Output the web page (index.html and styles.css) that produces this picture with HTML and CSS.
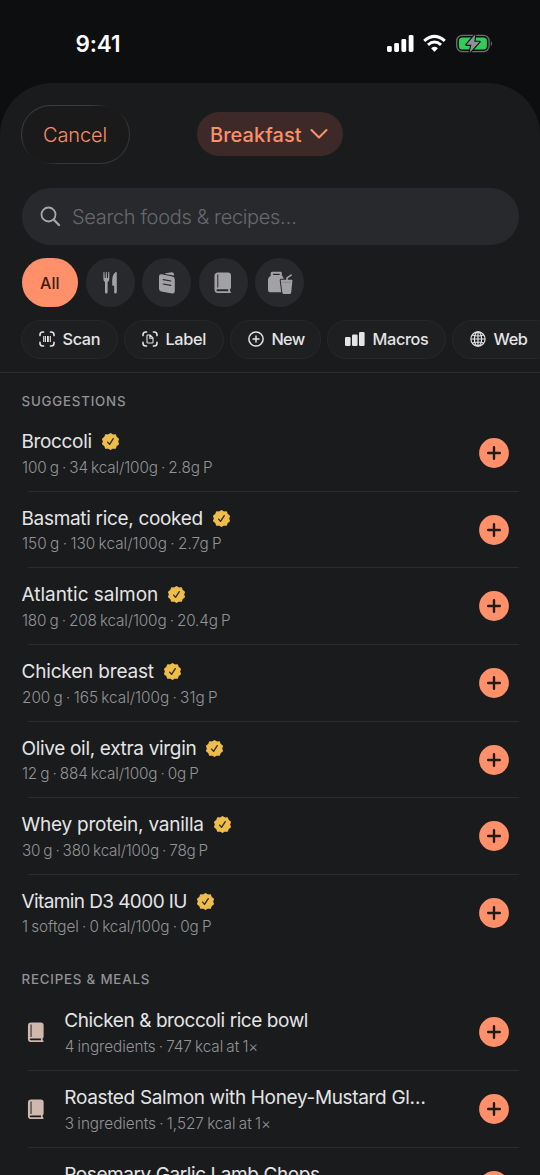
FILE: index.html
```html
<!DOCTYPE html>
<html lang="en">
<head>
<meta charset="utf-8">
<title>Add food</title>
<link rel="stylesheet" href="styles.css">
</head>
<body>
<svg width="0" height="0" class="defs" aria-hidden="true">
  <symbol id="seal" viewBox="0 0 16 16">
    <path fill="#efbd4c" stroke="#efbd4c" stroke-width="1.4" stroke-linejoin="round" d="M8 .7 10 2.1 12.5 1.9 13.3 4.2 15.3 5.7 14.5 8 15.3 10.3 13.3 11.8 12.5 14.1 10 13.9 8 15.3 6 13.9 3.5 14.1 2.7 11.8.7 10.3 1.5 8 .7 5.7 2.7 4.2 3.5 1.9 6 2.1Z"/>
    <path fill="none" stroke="#35301f" stroke-width="1.3" stroke-linecap="round" stroke-linejoin="round" d="M5.3 8.6 7.1 10.7 10.6 5.3"/>
  </symbol>
  <symbol id="plus" viewBox="0 0 30 30">
    <circle cx="15" cy="15" r="14.9" fill="#ff906a"/>
    <path d="M15 9.2V20.8M9.2 15H20.8" stroke="#211b1a" stroke-width="2.4" stroke-linecap="round"/>
  </symbol>
  <symbol id="book" viewBox="0 0 18 22">
    <path fill="currentColor" fill-rule="evenodd" d="M4 .5H14Q17 .5 17 3.5V15.2Q17 16.6 16 17V19.2Q17 19.4 17 20.2T16.2 21H4Q.5 21 .5 17.5V4Q.5 .5 4 .5ZM3.3 2.8V15.6H4.3V2.8Q4.3 2.3 3.8 2.3T3.3 2.8ZM3.6 17.2Q2.4 17.2 2.4 18.2T3.6 19.2H14.2V17.2Z"/>
  </symbol>
</svg>

<header class="status">
  <span class="time">9:41</span>
  <svg class="status-icons" width="106" height="20" viewBox="0 0 106 20">
    <g fill="#fff"><rect x="0" y="12" width="4.8" height="6" rx="1.4"/><rect x="7.2" y="9" width="4.8" height="9" rx="1.4"/><rect x="14.4" y="5" width="4.8" height="13" rx="1.4"/><rect x="21.7" y="1" width="4.8" height="17" rx="1.4"/></g>
    <g fill="none" stroke="#fff" stroke-width="3"><path d="M37.2 6.8Q47.5-2 57.8 6.8"/><path d="M41 10.8Q47.5 5.2 54 10.8"/></g>
    <path fill="#fff" d="M44.1 14.2Q47.5 11.4 50.9 14.2L48.2 17.3Q47.5 18 46.8 17.3Z"/>
    <rect x="69.7" y="1.4" width="32.4" height="16.2" rx="5.5" fill="none" stroke="#6a6c6e" stroke-width="1.4"/>
    <rect x="71.9" y="3.5" width="28" height="12" rx="3.5" fill="#32cc58"/>
    <path d="M103.9 6.7Q106.1 9.5 103.9 12.3Z" fill="#6a6c6e"/>
    <path d="M88.3.3 79.4 10.8H84.4L82.6 18.8 92.6 7.8H87.3Z" fill="#8f9293" stroke="#0e0f10" stroke-width="2.2" paint-order="stroke" stroke-linejoin="round"/>
  </svg>
</header>

<main class="sheet">
  <div class="nav">
    <button class="cancel"><span>Cancel</span></button>
    <button class="meal"><span>Breakfast</span><svg width="18" height="12" viewBox="0 0 18 12"><path d="M1.5 2 9 9.5 16.5 2" fill="none" stroke="currentColor" stroke-width="2.1" stroke-linecap="round" stroke-linejoin="round"/></svg></button>
  </div>

  <div class="search">
    <svg width="21" height="21" viewBox="0 0 21 21" fill="none" stroke="#a6a6aa" stroke-linecap="round"><circle cx="8.5" cy="8.5" r="7" stroke-width="1.8"/><path d="M13.8 13.8 19 19" stroke-width="2.3"/></svg>
    <span>Search foods &amp; recipes…</span>
  </div>

  <div class="filters">
    <button class="filter all">All</button>
    <button class="filter"><svg width="16" height="24" viewBox="0 0 16 24" fill="currentColor"><path d="M1.4 1.5V8Q1.5 10.4 3 11.1V21Q3 22.6 4.3 22.6T5.6 21V11.1Q7.2 10.4 7.3 8V1.5Q7.2.8 6.7.8T6.2 1.5L6 7H5L4.8 1.5Q4.8.8 4.3.8T3.8 1.5L3.7 7H2.8L2.5 1.5Q2.5.8 2 .8T1.4 1.5ZM14.8 2.3V21Q14.8 22.6 13.5 22.6T12.2 21V14.7H10.9Q10.2 14.7 10.2 14V9Q10.3 3.5 13.7 1 14.8.5 14.8 2.3Z"/></svg></button>
    <button class="filter"><svg width="18" height="22" viewBox="0 0 18 22"><path fill="currentColor" d="M6.5 1.6 13.5.2Q15.7 0 16.1 2.3V3.4L8 2.2Z"/><path fill="currentColor" d="M3.5 2.3 14.4 4.5Q16.8 5 16.8 7.4V19.2Q16.8 21.7 14.2 21.5L3.2 19.4Q1 19 1 16.7V4.4Q1 2 3.5 2.3Z"/><path d="M5.2 7.7 12.8 9M5.2 12 12.8 13.3" stroke="#28292c" stroke-width="1.2" stroke-linecap="round"/></svg></button>
    <button class="filter"><svg width="18" height="22"><use href="#book"/></svg></button>
    <button class="filter"><svg width="26" height="24" viewBox="0 0 26 24"><path fill="currentColor" d="M5.2.8H13.6Q14.8.8 14.8 2V4.6Q16.8 6 16.8 8.3V19Q16.8 21.2 14.6 21.2H3.2Q1 21.2 1 19V8.5Q1 6.2 3.7 4.7V2.2Q3.8.8 5.2.8Z"/><path d="M6.5 3.4H12.2" stroke="#28292c" stroke-width="1.2" stroke-linecap="round"/><path d="M14.2 8.8H24.6Q25.5 8.8 25.4 9.8L24.2 21.5Q24 23 22.5 23H17Q15.5 23 15.3 21.5L13.8 10Q13.6 8.8 14.2 8.8Z" fill="currentColor" stroke="#28292c" stroke-width="2" paint-order="stroke"/><path d="M20 9V6.9L24.2 4.2" fill="none" stroke="currentColor" stroke-width="1.6" stroke-linecap="round"/><path d="M15.6 11.2H24" stroke="#77787b" stroke-width=".7"/></svg></button>
  </div>

  <div class="actions">
    <button class="action scan"><svg width="16" height="16" viewBox="0 0 16 16" fill="none" stroke="currentColor" stroke-linecap="round"><path stroke-width="1.6" d="M1 4.6V3.8Q1 1 3.8 1H4.6M11.4 1H12.2Q15 1 15 3.8V4.6M15 11.4V12.2Q15 15 12.2 15H11.4M4.6 15H3.8Q1 15 1 12.2V11.4"/><path stroke-linecap="butt" stroke-width="1.1" d="M4.7 5V11M6.4 5V11M11.3 5V11"/><path stroke-linecap="butt" stroke-width="1.8" d="M8.9 5V11"/></svg><span>Scan</span></button>
    <button class="action label"><svg width="16" height="16" viewBox="0 0 16 16" fill="none" stroke="currentColor" stroke-linecap="round"><path stroke-width="1.6" d="M1 4.6V3.8Q1 1 3.8 1H4.6M11.4 1H12.2Q15 1 15 3.8V4.6M15 11.4V12.2Q15 15 12.2 15H11.4M4.6 15H3.8Q1 15 1 12.2V11.4"/><path stroke-width="1.1" stroke-linejoin="round" d="M5 4.6Q5 4 5.6 4H8L11 7V11.2Q11 12 10.2 12H5.8Q5 12 5 11.2ZM7.8 4.3V7.2H10.7"/></svg><span>Label</span></button>
    <button class="action new"><svg width="16" height="16" viewBox="0 0 16 16" fill="none" stroke="currentColor" stroke-linecap="round" stroke-width="1.5"><circle cx="8" cy="8" r="7.1"/><path d="M8 5V11M5 8H11"/></svg><span>New</span></button>
    <button class="action macros"><svg width="20" height="14" viewBox="0 0 20 14" fill="currentColor"><rect x="0" y="5" width="5.6" height="9" rx="1.2"/><rect x="7" y="2.5" width="5.6" height="11.5" rx="1.2"/><rect x="14" y="0" width="5.6" height="14" rx="1.2"/></svg><span>Macros</span></button>
    <button class="action web"><svg width="16" height="16" viewBox="0 0 16 16" fill="none" stroke="currentColor" stroke-width="1.15"><circle cx="8" cy="8" r="7.1"/><ellipse cx="8" cy="8" rx="3.6" ry="7.1"/><path d="M8 1V15M1 8H15M2.3 4Q8 6 13.7 4M2.3 12Q8 10 13.7 12"/></svg><span>Web</span></button>
  </div>

  <section class="list">
    <h2>SUGGESTIONS</h2>
    <article class="row"><div class="text"><h3 class="n1">Broccoli<svg><use href="#seal"/></svg></h3><p class="s1">100 g · 34 kcal/100g · 2.8g P</p></div><svg class="add"><use href="#plus"/></svg></article>
    <article class="row"><div class="text"><h3 class="n2">Basmati rice, cooked<svg><use href="#seal"/></svg></h3><p class="s2">150 g · 130 kcal/100g · 2.7g P</p></div><svg class="add"><use href="#plus"/></svg></article>
    <article class="row"><div class="text"><h3 class="n3">Atlantic salmon<svg><use href="#seal"/></svg></h3><p class="s3">180 g · 208 kcal/100g · 20.4g P</p></div><svg class="add"><use href="#plus"/></svg></article>
    <article class="row"><div class="text"><h3 class="n4">Chicken breast<svg><use href="#seal"/></svg></h3><p class="s4">200 g · 165 kcal/100g · 31g P</p></div><svg class="add"><use href="#plus"/></svg></article>
    <article class="row"><div class="text"><h3 class="n5">Olive oil, extra virgin<svg><use href="#seal"/></svg></h3><p class="s5">12 g · 884 kcal/100g · 0g P</p></div><svg class="add"><use href="#plus"/></svg></article>
    <article class="row"><div class="text"><h3 class="n6">Whey protein, vanilla<svg><use href="#seal"/></svg></h3><p class="s6">30 g · 380 kcal/100g · 78g P</p></div><svg class="add"><use href="#plus"/></svg></article>
    <article class="row"><div class="text"><h3 class="n7">Vitamin D3 4000 IU<svg><use href="#seal"/></svg></h3><p class="s7">1 softgel · 0 kcal/100g · 0g P</p></div><svg class="add"><use href="#plus"/></svg></article>
  </section>

  <section class="list recipes">
    <h2>RECIPES &amp; MEALS</h2>
    <article class="row"><svg class="book" viewBox="0 0 18 22"><use href="#book"/></svg><div class="text"><h3 class="n8">Chicken &amp; broccoli rice bowl</h3><p class="s8">4 ingredients · 747 kcal at 1×</p></div><svg class="add"><use href="#plus"/></svg></article>
    <article class="row"><svg class="book" viewBox="0 0 18 22"><use href="#book"/></svg><div class="text"><h3 class="n9">Roasted Salmon with Honey-Mustard Gl…</h3><p class="s9">3 ingredients · 1,527 kcal at 1×</p></div><svg class="add"><use href="#plus"/></svg></article>
    <article class="row"><svg class="book" viewBox="0 0 18 22"><use href="#book"/></svg><div class="text"><h3 class="n10">Rosemary Garlic Lamb Chops</h3></div><svg class="add"><use href="#plus"/></svg></article>
  </section>
</main>
</body>
</html>
```
FILE: styles.css
```css
* { box-sizing: border-box; }
html, body { height: 100%; }
body {
  margin: 0;
  overflow: hidden;
  background: #0d0e0f;
  color: #e4e4e5;
  font-family: Inter, "Liberation Sans", sans-serif;
  display: flex;
  flex-direction: column;
}
.defs { position: absolute; }
button { font: inherit; color: inherit; border: 0; padding: 0; margin: 0; background: none; display: flex; align-items: center; white-space: nowrap; flex: none; }
svg { display: block; flex: none; }
h2, h3, p { margin: 0; font-weight: 400; white-space: nowrap; }

.status { flex: none; height: 83px; padding: 0 47px 0 75.5px; display: flex; justify-content: space-between; }
.time { color: #fff; font-size: 22.5px; font-weight: 600; line-height: 28px; margin-top: 30px; letter-spacing: -.1px; }
.status-icons { margin-top: 34px; }

.sheet { flex: none; height: 1092px; overflow: hidden; background: #1a1b1d; border-radius: 52px 52px 0 0; }
.nav { height: 105px; padding: 22px 22px 0 21px; display: flex; align-items: flex-start; }
.cancel {
  width: 109px; height: 59px; border: 1px solid transparent; border-radius: 30px;
  background:
    linear-gradient(#1b1a1a, #1b1a1a) padding-box,
    conic-gradient(#3a3b3c 0 8%, #1d1d1e 14% 17%, #363738 22% 58%, #1d1d1e 64% 68%, #3a3b3c 74%) border-box;
  justify-content: center; color: #f58e6b; font-size: 20px; font-weight: 300; letter-spacing: -.1px;
}
.cancel span { margin-left: -1px; }
.meal { width: 146px; height: 44px; margin: 7px 0 0 67px; padding-left: 13px; border-radius: 22px; background: #3d2a28; color: #fc906b; font-size: 20px; font-weight: 500; gap: 8px; }
.meal span { padding-top: 2px; letter-spacing: .05px; }

.search { height: 57px; margin: 0 21px 0 21.5px; padding-left: 18px; border-radius: 29px; background: #28292c; display: flex; align-items: center; gap: 11.5px; font-size: 20px; font-weight: 300; letter-spacing: -.33px; color: #67686c; }

.filters { display: flex; gap: 7.6px; padding: 13px 21.5px 0; }
.filter { width: 49px; height: 49px; border-radius: 25px; background: #28292c; color: #a2a2a6; justify-content: center; }
.filter.all { width: 56.5px; background: #ff906a; color: #3c1b12; font-size: 16px; font-weight: 500; }

.actions { display: flex; gap: 6px; height: 66px; padding: 13px 0 0 21px; border-bottom: 1px solid #2c2d2f; }
.action { height: 39px; border: 1px solid #27282a; border-radius: 20px; background: #1e1f21; padding-left: 17px; gap: 7.5px; font-size: 16.3px; font-weight: 450; }
.action span { margin-top: -1px; letter-spacing: -.35px; }
.action svg { margin-top: -1px; }
.scan { width: 97px; } .label { width: 100px; } .new { width: 91px; } .macros { width: 119px; } .web { width: 104px; }
.new span { letter-spacing: -.7px; }

.list h2 { height: 42.2px; padding: 18px 21.5px 0; font-size: 13.3px; line-height: 20px; font-weight: 450; letter-spacing: .8px; color: #929295; }
.row { height: 76.6px; padding: 14px 31px 0 21.5px; display: flex; position: relative; }
.row:not(:last-child)::after { content: ""; position: absolute; left: 28px; right: 21px; bottom: 0; height: 1px; background: #2b2c2e; }
.text { flex: 1; min-width: 0; }
.row h3 { display: flex; align-items: center; height: 26px; font-size: 19px; line-height: 26px; }
.row h3 svg { width: 17px; height: 17px; margin: -1px 0 0 10px; }
.row p { font-size: 15.3px; line-height: 22px; margin-top: 1.7px; padding-left: .5px; font-weight: 300; word-spacing: -1px; color: #939396; }
.add { width: 30px; height: 30px; margin-top: 9px; }
.recipes h2 { height: 43px; padding-top: 18px; }
.book { width: 18px; height: 21px; margin: 13.6px 19px 0 5.8px; color: #cfb8ae; }

.n1 { letter-spacing: -.35px; }
.n2 { letter-spacing: -.32px; }
.n3 { letter-spacing: -.02px; }
.n4 { letter-spacing: -.18px; }
.n5 { letter-spacing: -.32px; }
.n6 { letter-spacing: -.24px; }
.n7 { letter-spacing: -.6px; }
.n8 { letter-spacing: -.42px; }
.n9 { letter-spacing: -.34px; }
.n10 { letter-spacing: -.42px; }
.s1 { letter-spacing: -.13px; }
.s2 { letter-spacing: .05px; }
.s3 { letter-spacing: -.15px; }
.s4 { letter-spacing: 0; }
.s5 { letter-spacing: -.15px; }
.s6 { letter-spacing: -.22px; }
.s7 { letter-spacing: -.06px; }
.s8 { letter-spacing: -.08px; }
.s9 { letter-spacing: -.02px; }
```
